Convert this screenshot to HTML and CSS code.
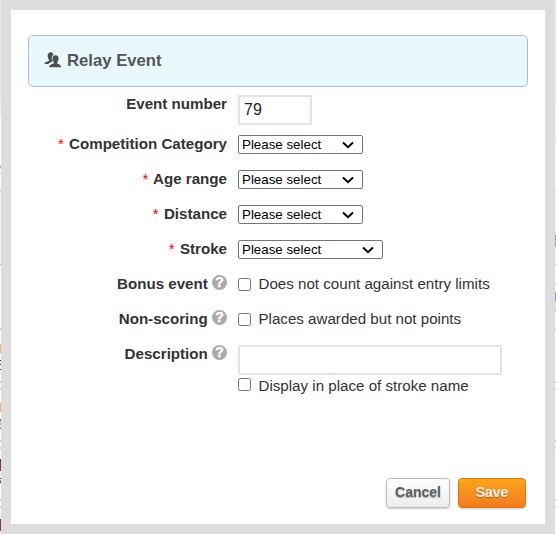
FILE: index.html
```
<!DOCTYPE html>
<html lang="en">
<head>
<meta charset="UTF-8">
<meta name="viewport" content="width=device-width, initial-scale=1.0">
<title>Relay Event</title>
<link rel="stylesheet" href="styles.css">
</head>
<body>
<div class="page">
    <div class="edge edge-left"></div>
    <div class="dialog">
        <div class="header">
            <svg class="people" width="18" height="16" viewBox="0 0 18 16" fill="#4d4d4d">
                <path d="M6.4 0.2C8.2 0 9.5 1 9.3 3C8.2 3.800 7.600 4.800 7.700 6.200C7.700 7.300 8.200 8 8.500 8.700V9.600L5 11.200L4.400 12H0.600C0.700 10.400 1.600 10 4.600 8.900C5.200 8.600 5.200 8.100 4.900 7.500C3.900 6.600 3.900 5.700 3.800 4.800C3.300 3.800 3.900 0.500 6.400 0.200Z"/>
                <path d="M11.600 3.200C13.700 3.200 14.800 4.500 14.400 6.600C15 7.200 14.500 8.400 14 8.700C13.800 9.600 13.300 10 13.200 10.400V11.400C14.800 12.100 17 12.600 17.200 15.200H5C5.200 12.700 7.400 12.200 9.800 11.400V10.400C9.500 9.900 9.200 9.500 9 8.700C8.400 8.300 8.200 7.100 8.600 6.700C8.200 4.600 9.300 3.200 11.600 3.200Z"/>
            </svg>
            <h1 class="title">Relay Event</h1>
        </div>
        <form class="form">
            <div class="row row-number">
                <label class="label" for="number">Event number</label>
                <input id="number" class="text number" type="text" value="79">
            </div>
            <div class="row">
                <label class="label" for="category"><span class="req">*</span> Competition Category</label>
                <select id="category" class="select"><option>Please select</option></select>
            </div>
            <div class="row">
                <label class="label" for="age"><span class="req">*</span> Age range</label>
                <select id="age" class="select"><option>Please select</option></select>
            </div>
            <div class="row">
                <label class="label" for="distance"><span class="req">*</span> Distance</label>
                <select id="distance" class="select"><option>Please select</option></select>
            </div>
            <div class="row">
                <label class="label" for="stroke"><span class="req">*</span> Stroke</label>
                <select id="stroke" class="select wide"><option>Please select</option></select>
            </div>
            <div class="row">
                <div class="label">Bonus event <span class="help">?</span></div>
                <label class="check"><input class="box" type="checkbox">Does not count against entry limits</label>
            </div>
            <div class="row">
                <div class="label">Non-scoring <span class="help">?</span></div>
                <label class="check"><input class="box" type="checkbox">Places awarded but not points</label>
            </div>
            <div class="row row-description">
                <label class="label" for="description">Description <span class="help">?</span></label>
                <div class="field">
                    <input id="description" class="text description" type="text">
                    <label class="check"><input class="box" type="checkbox">Display in place of stroke name</label>
                </div>
            </div>
        </form>
        <div class="actions">
            <button class="btn cancel" type="button">Cancel</button>
            <button class="btn save" type="button">Save</button>
        </div>
    </div>
    <div class="edge edge-right"></div>
</div>
</body>
</html>
```
FILE: styles.css
```
* {
    box-sizing: border-box;
}

body {
    margin: 0;
    background-color: #fff;
    color: #333;
    font-family: "Liberation Sans", Arial, sans-serif;
    font-size: 15.13px;
}

.page {
    display: grid;
    grid-template-columns: 1px 554px 1px;
    height: 534px;
    overflow: hidden;
}

/* slivers of the page behind the dialog */
.edge-left {
    background: linear-gradient(
        #dfe9eb 0 100px, #e0f5f5 100px 115px, #fff 115px 165px,
        #f8c8c0 165px 166px, #d8a0b8 166px 168px, #f8c8c0 168px 169px, #fff 169px 172px, #f8c8c0 172px 173px,
        #fff 173px 190px, #a9c3d6 190px 191px, #e8f5fc 191px 264px, #a9c3d6 264px 265px,
        #fff 265px 328px, #ccc 328px 330px, #fff 330px 344px, #f0b070 344px 353px,
        #fff 353px 360px, #333 360px 361px, #fff 361px 364px, #333 364px 365px, #fff 365px 369px, #333 369px 370px,
        #fff 370px 381px, #ccc 381px 383px, #fff 383px 388px, #ccc 388px 390px,
        #fff 390px 403px, #f0b070 403px 412px, #fff 412px 419px, #a86a3c 419px 420px, #2878c8 420px 421px,
        #8cd8f8 421px 423px, #f0c8a0 423px 424px, #90b8d8 424px 425px, #fff 425px 427px, #58a8d8 427px 428px, #b87850 428px 429px,
        #fff 429px 440px, #ccc 440px 442px, #fff 442px 447px, #ccc 447px 449px,
        #fff 449px 459px, #404040 459px 462px, #943038 462px 471px, #fff 471px 478px,
        #333 478px 479px, #fff 479px 480px, #e8a030 480px 481px, #883020 481px 482px, #3888d8 482px 483px, #90e0f8 483px 484px,
        #fff 484px 499px, #ccc 499px 501px, #fff 501px 506px, #ccc 506px 508px,
        #fff 508px 519px, #404040 519px 522px, #943038 522px 531px, #fff 531px);
}

.edge-right {
    background: linear-gradient(
        #eee 0 99px, #ddd 99px 100px, #f3f3f3 100px 142px, #ddd 142px 143px,
        #fff 143px 190px, #c8c0c0 190px 191px, #ebf5fd 191px 235px,
        #807860 235px 236px, #c0b090 236px 239px, #807860 239px 240px, #c0b090 240px 245px, #807860 245px 246px,
        #ebf5fd 246px 264px, #a9c3d6 264px 265px, #fff 265px 283px, #aaa 283px 284px,
        #fff 284px 292px, #78a8d8 292px 302px, #e8e8e8 302px 311px, #bbb 311px 312px,
        #fff 312px 328px, #ccc 328px 330px, #fff 330px 381px, #ccc 381px 383px, #fff 383px 388px, #ccc 388px 390px,
        #fff 390px 440px, #ccc 440px 442px, #fff 442px 447px, #ccc 447px 449px,
        #fff 449px 499px, #ccc 499px 501px, #fff 501px 506px, #ccc 506px 508px, #fff 508px);
}

.dialog {
    display: flex;
    flex-direction: column;
    border: 10px solid #ddd;
    padding: 25px 17px 16px;
    background-color: #fff;
}

.header {
    display: flex;
    align-items: center;
    height: 52px;
    padding: 0 15px;
    border: 1px solid #a9c0cf;
    border-radius: 5px;
    background-color: #e9f8ff;
}

.title {
    margin: 0 0 0 5px;
    font-size: 16.7px;
    line-height: 20px;
    color: #555;
}

.people {
    margin-top: -3px;
}

.form {
    padding-top: 8px;
}

.row {
    display: grid;
    grid-template-columns: 199px 1fr;
    column-gap: 11px;
    align-items: start;
    height: 35px;
}

.row-number {
    height: 40px;
}

.label {
    font-weight: bold;
    line-height: 18px;
    text-align: right;
    white-space: nowrap;
}

.req {
    margin-right: 1px;
    color: #f00;
    font-weight: normal;
}

.help {
    display: inline-block;
    width: 15px;
    height: 15px;
    border-radius: 50%;
    background-color: #aaa;
    color: #fff;
    font-size: 14px;
    line-height: 15px;
    text-align: center;
    vertical-align: 2px;
    -webkit-text-stroke: 0.4px #fff;
}

.text {
    display: block;
    height: 30px;
    padding: 0 4px 1px;
    border: 2px solid #e3e3e3;
    color: #222;
    font-family: inherit;
    font-size: 16px;
}

.number {
    width: 74px;
}

.description {
    width: 264px;
}

.select {
    width: 125px;
    height: 19px;
    border: 1px solid #767676;
    border-radius: 2px;
    padding: 0 20px 0 3px;
    appearance: none;
    background: #fff url("data:image/svg+xml,%3Csvg xmlns='http://www.w3.org/2000/svg' width='12' height='8'%3E%3Cpath d='M1 1.500L6 6.200L11 1.500' fill='none' stroke='%23000' stroke-width='2'/%3E%3C/svg%3E") no-repeat right 8px center;
    color: #000;
    font-family: inherit;
    font-size: 13.333px;
    line-height: 17px;
}

.wide {
    width: 145px;
}

.check {
    display: flex;
    align-items: flex-start;
    line-height: 18px;
}

.box {
    width: 13px;
    height: 13px;
    margin: 3px 7.500px 0 0;
}

.field .check {
    margin-top: 2px;
}

.field .box {
    margin-top: 1px;
}

.actions {
    display: flex;
    justify-content: flex-end;
    gap: 8px;
    margin-top: auto;
    padding-right: 2px;
}

.btn {
    height: 30px;
    padding: 0 0 2px;
    border-radius: 4px;
    font-family: inherit;
    font-size: 14px;
    font-weight: bold;
    box-shadow: 0 1px 2px rgba(0, 0, 0, 0.2);
}

.cancel {
    width: 64px;
    border: 1px solid #bbb;
    background: linear-gradient(#fff, #ededed);
    color: #606060;
    text-shadow: 0 1px 1px rgba(0, 0, 0, 0.3);
}

.save {
    width: 68px;
    border: 1px solid #da7c0c;
    background: linear-gradient(#faa51a, #f47a20);
    color: #fef4e9;
    text-shadow: 0 1px 1px rgba(0, 0, 0, 0.3);
}
```
